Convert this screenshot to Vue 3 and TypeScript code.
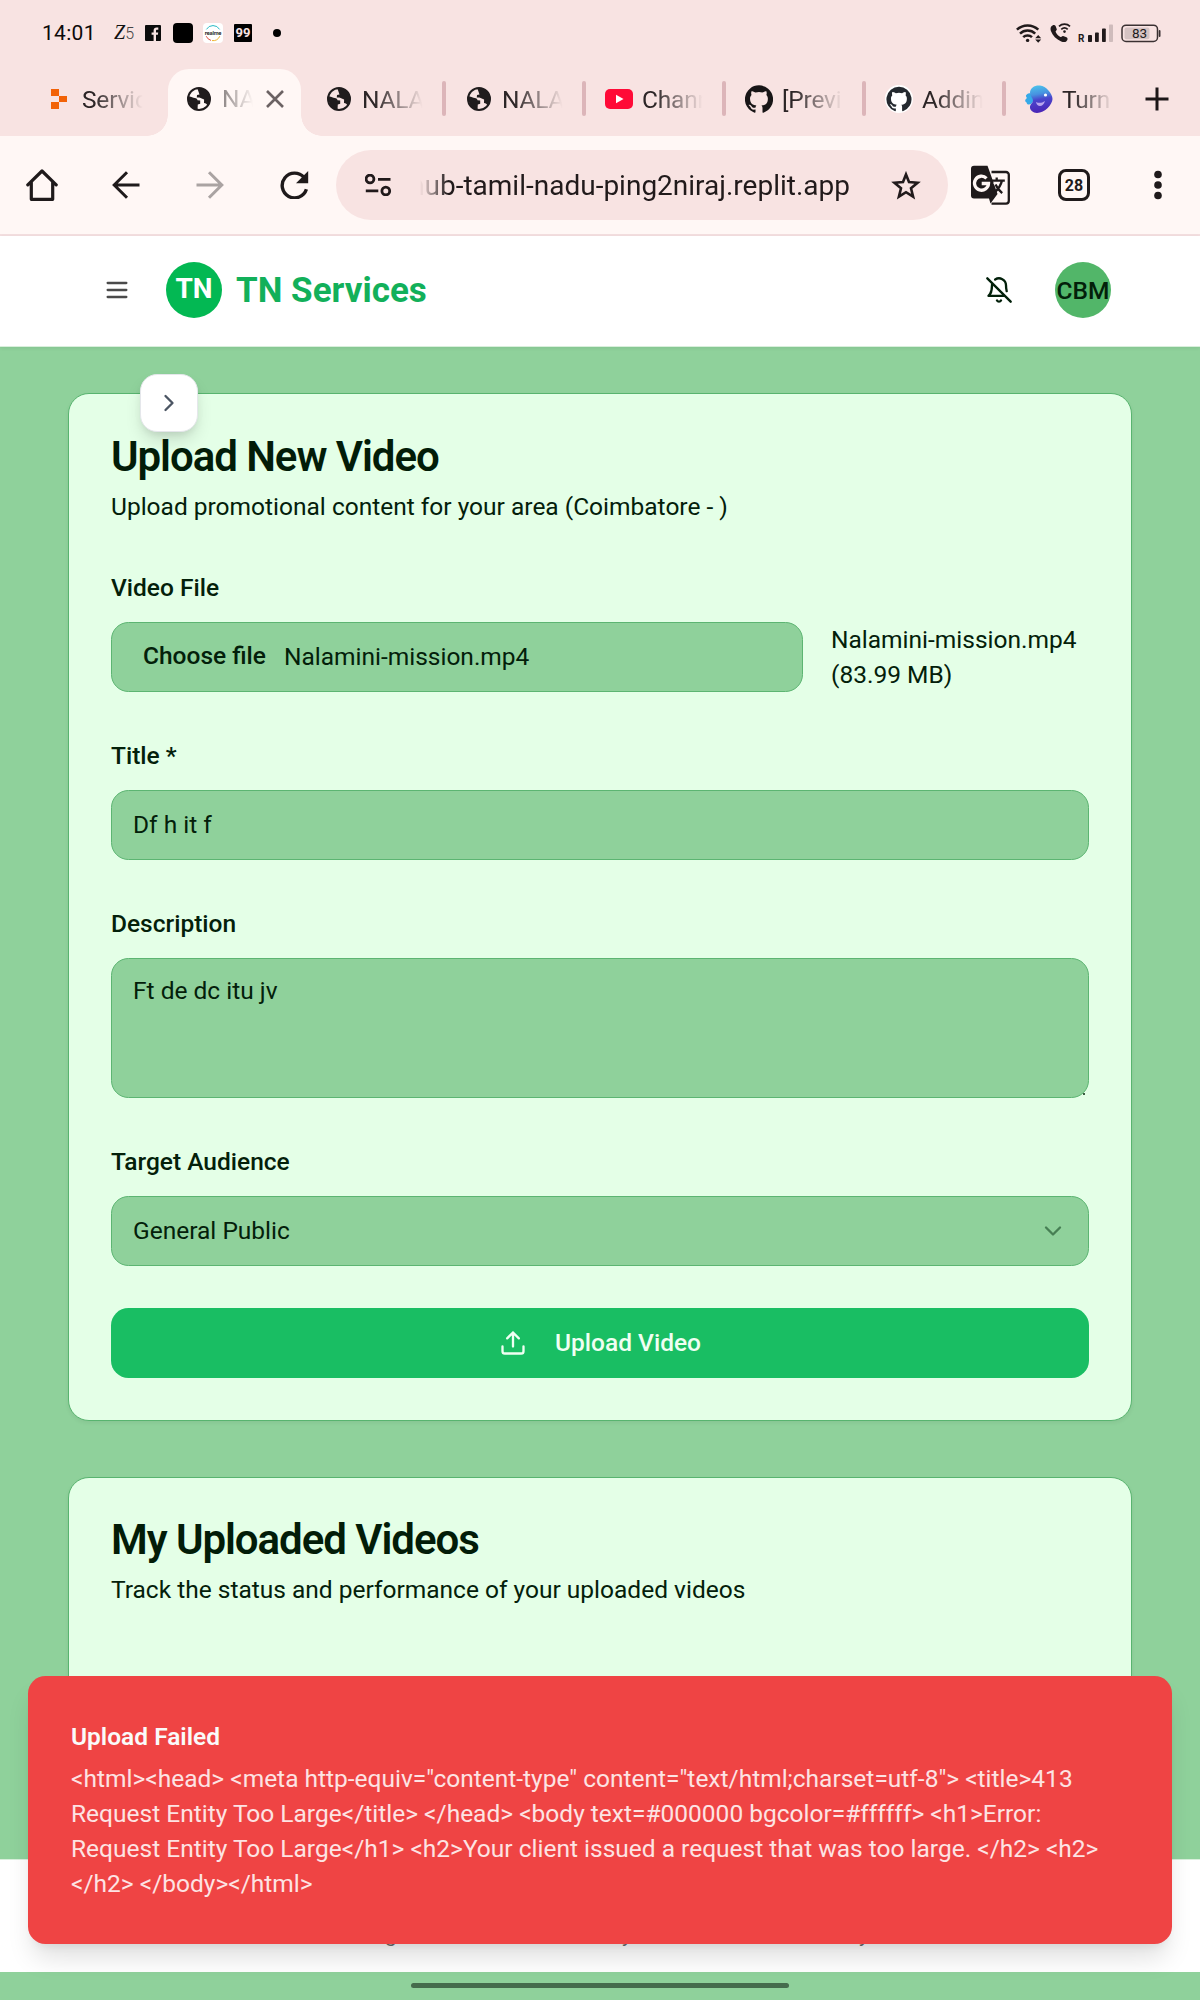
<script setup lang="ts">
interface Tab {
  icon: 'replit' | 'globe' | 'youtube' | 'github' | 'github2' | 'bird'
  label: string
  active?: boolean
  divider?: boolean
}

const tabs: Tab[] = [
  { icon: 'replit', label: 'Servic' },
  { icon: 'globe', label: 'NA', active: true },
  { icon: 'globe', label: 'NALA', divider: true },
  { icon: 'globe', label: 'NALA', divider: true },
  { icon: 'youtube', label: 'Chann', divider: true },
  { icon: 'github', label: '[Previ', divider: true },
  { icon: 'github2', label: 'Addin', divider: true },
  { icon: 'bird', label: 'Turn' },
]

const octocat =
  'M12 .3a12 12 0 0 0-3.8 23.4c.6.1.8-.3.8-.6v-2c-3.3.7-4-1.6-4-1.6-.6-1.4-1.4-1.8-1.4-1.8-1-.7.1-.7.1-.7 1.2 0 1.9 1.2 1.9 1.2 1 1.8 2.8 1.3 3.5 1 0-.8.4-1.3.7-1.6-2.7-.3-5.5-1.3-5.5-6 0-1.2.5-2.3 1.3-3.1-.2-.4-.6-1.6 0-3.2 0 0 1-.3 3.4 1.2a11.5 11.5 0 0 1 6 0c2.3-1.5 3.3-1.2 3.3-1.2.6 1.6.2 2.8 0 3.2.9.8 1.3 1.9 1.3 3.2 0 4.6-2.8 5.6-5.5 5.9.5.4.9 1 .9 2.2v3.3c0 .3.1.7.8.6A12 12 0 0 0 12 .3'

const errorMessage =
  '<html><head> <meta http-equiv="content-type" content="text/html;charset=utf-8"> <title>413 Request Entity Too Large</title> </head> <body text=#000000 bgcolor=#ffffff> <h1>Error: Request Entity Too Large</h1> <h2>Your client issued a request that was too large. </h2> <h2> </h2> </body></html>'
</script>

<template>
  <div class="screen">
    <div class="status">
      <div class="status-left">
        <span class="clock">14:01</span>
        <span class="z5"><b>Z</b>5</span>
        <svg class="fb" width="16" height="16" viewBox="0 0 16 16">
          <rect width="16" height="16" rx="1" fill="#0b0b0b" />
          <path d="M8.600 16V9.800H6.600V7.400h2V5.600c0-2 1.200-3.100 3-3.100h1.700v2.200h-1.100c-1 0-1.200.5-1.200 1.200v1.500h2.200l-.3 2.400H11V16z" fill="#f8e3e2" />
        </svg>
        <span class="black-app"></span>
        <svg class="realme" width="20" height="20" viewBox="0 0 20 20">
          <rect width="20" height="20" rx="4" fill="#fff" />
          <path d="M3.400 6.400A7.600 7.600 0 0 1 16.600 6.400" fill="none" stroke="#27b9c4" stroke-width="1" />
          <path d="M3.200 13.200A7.600 7.600 0 0 0 8 17.400" fill="none" stroke="#e05245" stroke-width="1" />
          <path d="M9 17.600A7.600 7.600 0 0 0 16.800 13.200" fill="none" stroke="#efb42f" stroke-width="1" />
          <text x="10" y="11.800" text-anchor="middle" font-size="5.400" font-weight="600" font-family="Inter, sans-serif" letter-spacing="-.2" fill="#111">realme</text>
        </svg>
        <span class="n99">99</span>
        <span class="dot"></span>
      </div>
      <div class="status-right">
        <svg width="26" height="20" viewBox="0 0 26 20" fill="none" stroke="#211a1b" stroke-width="2.500">
          <path d="M.9 6.700a15.500 15.500 0 0 1 21.400 0" />
          <path d="M4 10.600a11 11 0 0 1 15.200 0" />
          <path d="M7.200 14.200a6.300 6.300 0 0 1 8.800 0" />
          <circle cx="11.600" cy="17.400" r="1.700" fill="#211a1b" stroke="none" />
          <path d="M19.200 15.200l3-3.200 3 3.200zM19.200 16.600l3 3.200 3-3.200z" fill="#211a1b" stroke="none" />
        </svg>
        <svg class="call" width="21" height="20" viewBox="0 0 21 20" fill="none">
          <path d="M1.200 3.600C2.600 1.600 4.800 1.400 5.600 3l1.200 3.200c.3.900-1.400 1.700-1.200 2.600.8 2.200 2.600 4 4.900 5.200.9.400 1.600-1.400 2.600-1l3.400 1.300c1.600.8 1.400 2.800-.3 4.200-1.300 1-3.400.6-5-.1C6.300 16.300 2.600 12.400.9 7.900c-.5-1.500-.5-3 .3-4.300z" fill="#211a1b" />
          <path d="M9 3.300a8 8 0 0 1 11 0M11.300 6.300a4.800 4.800 0 0 1 6.400 0" stroke="#211a1b" stroke-width="1.700" />
          <circle cx="14.500" cy="8.600" r="1.300" fill="#211a1b" />
        </svg>
        <svg class="signal" width="36" height="20" viewBox="0 0 36 20">
          <text x="0" y="19" font-size="10" font-weight="700" font-family="Roboto, sans-serif" fill="#211a1b">R</text>
          <rect x="10" y="12" width="4" height="7" rx=".8" fill="#211a1b" />
          <rect x="17" y="9.500" width="3.800" height="9.500" rx=".8" fill="#211a1b" />
          <rect x="24" y="5.500" width="3.800" height="13.500" rx=".8" fill="#211a1b" />
          <rect x="31" y="1.500" width="4" height="17.500" rx=".8" fill="#cfbcbc" />
        </svg>
        <svg class="battery" width="40" height="19" viewBox="0 0 40 19">
          <rect x="1" y="1.200" width="35.500" height="16.300" rx="4" fill="none" stroke="#3a3132" stroke-width="1.500" />
          <rect x="3.500" y="3.500" width="25" height="11.700" rx="2" fill="#d5c3c3" />
          <rect x="37.700" y="6" width="1.800" height="7" rx=".9" fill="#3a3132" />
          <text x="18.600" y="14" text-anchor="middle" font-size="13.500" font-family="Roboto, sans-serif" fill="#211a1b">83</text>
        </svg>
      </div>
    </div>

    <div class="tabs">
      <div v-for="(tab, i) in tabs" :key="i" class="tab" :class="{ active: tab.active, divider: tab.divider }">
        <span class="favicon">
          <svg v-if="tab.icon === 'replit'" width="18" height="22" viewBox="0 0 18 22">
            <path d="M1 1h8v7H1zM9 8h8v6H9zM1 14h8v7H1z" fill="#f26207" />
          </svg>
          <svg v-else-if="tab.icon === 'globe'" width="24" height="24" viewBox="0 0 24 24">
            <circle cx="12" cy="12" r="11" fill="none" stroke="#201c1d" stroke-width="2" />
            <path d="M1.600 9.600c2.400-.3 4.200 1.200 6.200 1.400 1.800 0 2.600 1 2.700 2.300l2.700.2v3.200l-2.400.7-.3 5.400C5 22 1 17.500 1.600 9.600zM10.300 1.300c5-.8 10 2 12.300 7.400.8 3.600.2 7-2 9.800-.7-1.600-1.900-2.300-3.600-2.500l.1-3.500-4.700-2.100-2.600.2.200-2.700 2.500-.3z" fill="#201c1d" />
          </svg>
          <svg v-else-if="tab.icon === 'youtube'" width="28" height="20" viewBox="0 0 28 20">
            <rect width="28" height="20" rx="5" fill="#ff0a37" />
            <path d="M11 5.700v8.600l7.500-4.300z" fill="#fff" />
          </svg>
          <svg v-else-if="tab.icon === 'github'" width="28" height="28" viewBox="0 0 24 24">
            <path :d="octocat" fill="#181516" />
          </svg>
          <svg v-else-if="tab.icon === 'github2'" width="28" height="28" viewBox="0 0 28 28">
            <circle cx="14" cy="14" r="14" fill="#fff" />
            <path :d="octocat" fill="#24292f" transform="translate(1.500 1.500) scale(1.040)" />
          </svg>
          <svg v-else width="28" height="28" viewBox="0 0 28 28">
            <defs>
              <linearGradient id="birdFill" x1=".4" y1="0" x2=".55" y2="1">
                <stop offset="0" stop-color="#4cc0ea" />
                <stop offset=".3" stop-color="#4791e0" />
                <stop offset=".5" stop-color="#4a46cc" />
                <stop offset="1" stop-color="#4a22b4" />
              </linearGradient>
            </defs>
            <path d="M8 10C5 7 2 8 1 10.500c-.3 1.500 1.300 2 .5 3-1.500 1-1.800 3-.5 3.500 1 .5.500 2 2 2.500 2 .5 4-1 5-3z" fill="#35a9e8" />
            <path d="M5 8C5 2.500 10 0 15 .5c6 .6 12.500 8 12.500 13.500C27.500 19 20 28 12 28c-4 0-7.500-3-7-6.500.3-2.500 3-3.500 3-6S5 11 5 8z" fill="url(#birdFill)" />
            <path d="M11 17c3 1.500 6 1 9-1-1 3.500-3 5-5 5s-3.500-1.500-4-4z" fill="#b9a6ee" />
            <circle cx="20.500" cy="10" r="1.600" fill="#fff" />
          </svg>
        </span>
        <span class="tab-label">{{ tab.label }}</span>
        <svg v-if="tab.active" class="close" width="20" height="20" viewBox="0 0 20 20" stroke="#6b6263" stroke-width="2.600">
          <path d="M2 2l16 16M18 2L2 18" />
        </svg>
      </div>
      <svg class="new-tab" width="24" height="24" viewBox="0 0 24 24" stroke="#1d1718" stroke-width="3">
        <path d="M12 .5v23M.5 12h23" />
      </svg>
    </div>

    <div class="toolbar">
      <svg class="home" width="32" height="32" viewBox="0 0 32 32" fill="none" stroke="#1f1a1b" stroke-width="3.200" stroke-linejoin="round" stroke-linecap="round">
        <path d="M1.800 15.800L16 2l14.200 13.800M5.300 13v17.300h21.400V13" />
      </svg>
      <svg class="back" width="28" height="28" viewBox="0 0 28 28" fill="none" stroke="#1f1a1b" stroke-width="3">
        <path d="M27.500 14H2.500M15 1.200L2.200 14 15 26.800" />
      </svg>
      <svg class="forward" width="28" height="28" viewBox="0 0 28 28" fill="none" stroke="#aaa3a2" stroke-width="3">
        <path d="M.5 14h25M13 1.200L25.800 14 13 26.800" />
      </svg>
      <svg class="reload" width="29" height="28" viewBox="0 0 29 28" fill="none">
        <path d="M24 6.400A12.400 12.400 0 1 0 26.400 18.300" stroke="#1f1a1b" stroke-width="3.400" />
        <path d="M28.200 0v12.300H16z" fill="#1f1a1b" />
      </svg>
      <div class="omnibox">
        <svg width="27" height="22" viewBox="0 0 27 22" fill="none" stroke="#211a1b" stroke-width="2.800">
          <circle cx="5" cy="5" r="3.900" />
          <path d="M13 5.300h12.500M.8 16.800h12.500" />
          <circle cx="20.800" cy="17" r="3.900" />
        </svg>
        <span class="url"><span>hub-tamil-nadu-ping2niraj.replit.app</span></span>
        <svg class="star" width="30" height="29" viewBox="0 0 30 29" fill="none" stroke="#211a1b" stroke-width="2.600">
          <path d="M15 3.400l3 7.600 8.600.700-6.600 5.600 2.100 8.300L15 21.200l-7.100 4.400 2.100-8.300-6.600-5.600 8.600-.700z" />
        </svg>
      </div>
      <svg class="translate" width="39" height="40" viewBox="0 0 39 40">
        <path d="M20.500 7H35a2.800 2.800 0 0 1 2.800 2.800v26A2.800 2.800 0 0 1 35 38.600H20.500" fill="none" stroke="#1f1a1b" stroke-width="2.300" />
        <path d="M3 .8h13.500l2.800 7.700 7.200 20.500-7 9.500-1.500-5H3a3 3 0 0 1-3-3V3.800a3 3 0 0 1 3-3z" fill="#1f1a1b" />
        <path d="M22.300 18.500l1.800-1.200h4.400c-.7 2-1.700 3.700-3.200 5.200z" fill="#fff7f5" />
        <path d="M20 15.600h13.800M25.700 12.500v3.100M31 15.600c-1.300 4.800-3.500 8.200-6.500 11M24.500 19.500c1.300 3 3.300 5.800 6.700 8.700" fill="none" stroke="#1f1a1b" stroke-width="2.300" />
        <path d="M15.500 13.300a7 7 0 1 0 2 5.200h-6.800" fill="none" stroke="#fff7f5" stroke-width="3.300" />
      </svg>
      <span class="tab-count">28</span>
      <svg class="dots" width="8" height="30" viewBox="0 0 8 30" fill="#1f1a1b">
        <circle cx="4" cy="4.500" r="3.800" /><circle cx="4" cy="15" r="3.800" /><circle cx="4" cy="25.500" r="3.800" />
      </svg>
    </div>

    <header class="app-header">
      <svg class="menu" width="28" height="28" viewBox="0 0 24 24" fill="none" stroke="#4a4a4a" stroke-width="2" stroke-linecap="round">
        <path d="M4 6h16M4 12h16M4 18h16" />
      </svg>
      <span class="logo">TN</span>
      <span class="brand">TN Services</span>
      <svg class="bell" width="28" height="28" viewBox="0 0 24 24" fill="none" stroke="#02200a" stroke-width="2" stroke-linecap="round" stroke-linejoin="round">
        <path d="M8.700 3A6 6 0 0 1 18 8a21.300 21.300 0 0 0 .6 5M17 17H3s3-2 3-9a4.670 4.670 0 0 1 .3-1.700M10.300 21a1.940 1.940 0 0 0 3.400 0M2 2l20 20" />
      </svg>
      <span class="avatar">CBM</span>
    </header>

    <main class="body">
      <button class="expand" type="button" aria-label="Expand">
        <svg width="28" height="28" viewBox="0 0 24 24" fill="none" stroke="#4b5563" stroke-width="2" stroke-linecap="round" stroke-linejoin="round">
          <path d="M9 18l6-6-6-6" />
        </svg>
      </button>

      <section class="card">
        <h2>Upload New Video</h2>
        <p class="sub">Upload promotional content for your area (Coimbatore - )</p>

        <div class="group">
          <label>Video File</label>
          <div class="file-row">
            <div class="field file"><b>Choose file</b><span>Nalamini-mission.mp4</span></div>
            <div class="file-info">Nalamini-mission.mp4 (83.99 MB)</div>
          </div>
        </div>
        <div class="group">
          <label>Title *</label>
          <div class="field">Df h it f</div>
        </div>
        <div class="group">
          <label>Description</label>
          <div class="field area">Ft de dc itu jv<i class="grip"></i></div>
        </div>
        <div class="group">
          <label>Target Audience</label>
          <div class="field select">
            <span>General Public</span>
            <svg width="28" height="28" viewBox="0 0 24 24" fill="none" stroke="#477f54" stroke-width="2" stroke-linecap="round" stroke-linejoin="round">
              <path d="M6 9l6 6 6-6" />
            </svg>
          </div>
        </div>
        <button class="upload" type="button">
          <svg width="28" height="28" viewBox="0 0 24 24" fill="none" stroke="#effff2" stroke-width="2" stroke-linecap="round" stroke-linejoin="round">
            <path d="M21 15v4a2 2 0 0 1-2 2H5a2 2 0 0 1-2-2v-4M17 8l-5-5-5 5M12 3v12" />
          </svg>
          <span>Upload Video</span>
        </button>
      </section>

      <section class="card second">
        <h2>My Uploaded Videos</h2>
        <p class="sub">Track the status and performance of your uploaded videos</p>
      </section>
    </main>

    <footer class="foot"><span>g</span><span>y</span><span>y</span></footer>
    <div class="nav"><span></span></div>

    <div class="toast" role="alert">
      <strong>Upload Failed</strong>
      <p>{{ errorMessage }}</p>
    </div>
  </div>
</template>

<style>
body {
  margin: 0;
}
</style>

<style scoped>
* {
  box-sizing: border-box;
}
svg {
  display: block;
  flex: none;
}
.screen {
  position: relative;
  width: 1200px;
  height: 2000px;
  overflow: hidden;
  display: flex;
  flex-direction: column;
  background: #8fd19b;
  font-family: Roboto, sans-serif;
  font-size: 24.5px;
  line-height: 35px;
  color: #03200a;
}
.status {
  flex: none;
  height: 66px;
  background: #f8e3e2;
  display: flex;
  justify-content: space-between;
  padding: 0 39px 0 42px;
}
.status-left,
.status-right {
  display: flex;
  align-items: center;
  height: 66px;
}
.clock {
  width: 72px;
  font-size: 21px;
  letter-spacing: 0.3px;
  color: #0c0a0a;
}
.z5 {
  width: 31px;
  font-size: 16px;
  font-weight: 300;
  white-space: nowrap;
  color: #444;
}
.z5 b {
  font-family: 'Liberation Serif', serif;
  font-style: italic;
  font-weight: 400;
  font-size: 20px;
  color: #111;
}
.black-app {
  width: 20px;
  height: 20px;
  margin: 0 10px 0 12px;
  border-radius: 4px;
  background: #000;
}
.n99 {
  width: 18px;
  height: 18px;
  margin-left: 11px;
  border-radius: 1px;
  background: #000;
  color: #f8e3e2;
  font-size: 13px;
  font-weight: 700;
  line-height: 18px;
  text-align: center;
}
.dot {
  width: 8px;
  height: 8px;
  margin-left: 21px;
  border-radius: 50%;
  background: #000;
}
.call {
  margin-left: 8px;
}
.signal {
  margin-left: 7px;
}
.battery {
  margin-left: 7px;
}
.tabs {
  flex: none;
  height: 70px;
  background: #f8e3e2;
  display: flex;
  padding-left: 25px;
}
.tab {
  position: relative;
  flex: none;
  width: 140px;
  height: 66px;
  display: flex;
  align-items: center;
  padding-left: 19px;
  letter-spacing: -0.2px;
  color: #2c2526;
}
.favicon {
  flex: none;
  width: 30px;
  margin-right: 8px;
  display: flex;
  justify-content: center;
}
.tab-label {
  width: 62px;
  overflow: hidden;
  white-space: nowrap;
  -webkit-mask-image: linear-gradient(90deg, #000 20%, transparent 98%);
  mask-image: linear-gradient(90deg, #000 20%, transparent 98%);
}
.tab:nth-child(8) .tab-label {
  width: 52px;
}
.divider::after {
  content: '';
  position: absolute;
  right: -1px;
  top: 15px;
  width: 4px;
  height: 35px;
  border-radius: 2px;
  background: #dcb5b9;
}
.tab.active {
  width: 133px;
  height: 67px;
  margin: 3px 4px 0 3px;
  padding: 0 0 8px 16px;
  border-radius: 21px 21px 0 0;
  background: #fff7f5;
}
.tab.active .tab-label {
  width: 33px;
  -webkit-mask-image: linear-gradient(90deg, rgba(0, 0, 0, 0.55), transparent 95%);
  mask-image: linear-gradient(90deg, rgba(0, 0, 0, 0.55), transparent 95%);
}
.tab.active::before,
.tab.active::after {
  content: '';
  position: absolute;
  bottom: 0;
  width: 21px;
  height: 21px;
}
.tab.active::before {
  left: -21px;
  background: radial-gradient(circle at 0 0, transparent 20.5px, #fff7f5 21px);
}
.tab.active::after {
  right: -21px;
  background: radial-gradient(circle at 100% 0, transparent 20.5px, #fff7f5 21px);
}
.close {
  margin-left: 10px;
}
.new-tab {
  margin: 21px 0 0 0;
}
.toolbar {
  flex: none;
  height: 100px;
  padding: 0 0 0 26px;
  background: #fff7f5;
  border-bottom: 2px solid #f4dfe0;
  display: flex;
  align-items: center;
}
.back {
  margin-left: 54px;
}
.forward {
  margin-left: 56px;
}
.reload {
  margin-left: 56px;
}
.omnibox {
  width: 612px;
  height: 70px;
  margin-left: 27px;
  padding: 0 27px 0 29px;
  border-radius: 35px;
  background: #f8e3e2;
  display: flex;
  align-items: center;
}
.url {
  width: 430px;
  height: 40px;
  margin-left: 28px;
  line-height: 41px;
  overflow: hidden;
  display: flex;
  justify-content: flex-end;
  font-size: 28px;
  white-space: nowrap;
  color: #211a1b;
  -webkit-mask-image: linear-gradient(90deg, transparent, #000 28px);
  mask-image: linear-gradient(90deg, transparent, #000 28px);
}
.star {
  margin-left: auto;
}
.translate {
  margin-left: 23px;
}
.tab-count {
  width: 32px;
  height: 32px;
  margin-left: 48px;
  border: 3px solid #1f1a1b;
  border-radius: 8px;
  font-size: 16px;
  font-weight: 700;
  line-height: 27px;
  text-align: center;
  color: #1f1a1b;
}
.dots {
  margin-left: 64px;
}
.app-header {
  position: relative;
  flex: none;
  height: 111px;
  padding: 0 89px 2px 103px;
  background: #fff;
  border-bottom: 1px solid #d9efdc;
  box-shadow: 0 1px 4px rgba(0, 0, 0, 0.08);
  display: flex;
  align-items: center;
}
.logo,
.avatar {
  flex: none;
  width: 56px;
  height: 56px;
  border-radius: 50%;
  display: flex;
  align-items: center;
  justify-content: center;
}
.logo {
  margin-left: 35px;
  background: #03b853;
  color: #fff;
  font-size: 28px;
  font-weight: 700;
  line-height: 54px;
  padding-bottom: 2px;
}
.brand {
  margin-left: 14px;
  font-size: 35px;
  font-weight: 700;
  color: #12b05a;
}
.bell {
  margin-left: auto;
  margin-right: 42px;
}
.avatar {
  background: #52b669;
  font-weight: 500;
}
.body {
  position: relative;
  flex: none;
  height: 1512px;
  padding: 46px 68px 0;
  overflow: hidden;
}
.expand {
  position: absolute;
  left: 140px;
  top: 27px;
  width: 58px;
  height: 58px;
  padding: 0;
  display: flex;
  align-items: center;
  justify-content: center;
  border: 1px solid #e5e7eb;
  border-radius: 17px;
  background: #fff;
  box-shadow: 0 10px 18px -3px rgba(0, 0, 0, 0.14), 0 4px 8px -3px rgba(0, 0, 0, 0.1);
}
.card {
  border: 1px solid #58b46f;
  border-radius: 21px;
  background: #e4ffe7;
  padding: 42px;
  box-shadow: 0 2px 4px rgba(0, 0, 0, 0.06);
}
.card.second {
  margin-top: 56px;
  height: 500px;
}
h2 {
  margin: 0 0 11.5px;
  font-size: 42px;
  line-height: 41px;
  font-weight: 600;
  letter-spacing: -1.05px;
  color: #021c08;
}
.card.second h2 {
  line-height: 40px;
  margin-bottom: 12px;
}
.sub {
  margin: 0 0 42px;
}
.group {
  margin-bottom: 42px;
}
label {
  display: block;
  height: 42px;
  margin-bottom: 14px;
  line-height: 44px;
  font-weight: 500;
}
.file-row {
  display: flex;
  gap: 28px;
}
.field {
  height: 70px;
  padding: 0 21px;
  border: 1px solid #5cb572;
  border-radius: 17.5px;
  background: #8fd19b;
  line-height: 68px;
}
.file {
  width: 692px;
  padding-left: 31px;
  display: flex;
}
.file b {
  margin-right: 18px;
  font-weight: 500;
  line-height: 66px;
}
.file-info {
  width: 258px;
}
.area {
  position: relative;
  height: 140px;
  padding-top: 14px;
  line-height: 35px;
}
.grip {
  position: absolute;
  right: 3px;
  bottom: 2px;
  width: 2px;
  height: 2px;
  background: #3b5c42;
}
.select {
  display: flex;
  align-items: center;
  justify-content: space-between;
}
.upload {
  width: 100%;
  height: 70px;
  padding: 0;
  border: 0;
  border-radius: 17.5px;
  background: #19be63;
  color: #effff2;
  display: flex;
  align-items: center;
  justify-content: center;
  gap: 28px;
  font: 500 24.5px/35px Roboto, sans-serif;
}
.foot {
  flex: none;
  height: 113px;
  padding: 58px 0 0 385px;
  border-top: 1px solid #d9efdc;
  background: #fff;
  font-size: 21px;
  color: #6b6b6b;
  display: flex;
}
.foot span {
  width: 237px;
}
.nav {
  flex: none;
  height: 28px;
  padding-top: 11px;
}
.nav span {
  display: block;
  width: 378px;
  height: 5px;
  margin: 0 auto;
  border-radius: 3px;
  background: #456c4d;
}
.toast {
  position: absolute;
  left: 28px;
  top: 1676px;
  width: 1144px;
  height: 268px;
  padding: 43px;
  border-radius: 17.5px;
  background: #ef4444;
  box-shadow: 0 18px 26px -5px rgba(0, 0, 0, 0.13), 0 7px 11px -7px rgba(0, 0, 0, 0.1);
  color: #fde3e3;
}
.toast strong {
  display: block;
  font-weight: 600;
  color: #fafafa;
}
.toast p {
  margin: 7px 0 0;
}
</style>
